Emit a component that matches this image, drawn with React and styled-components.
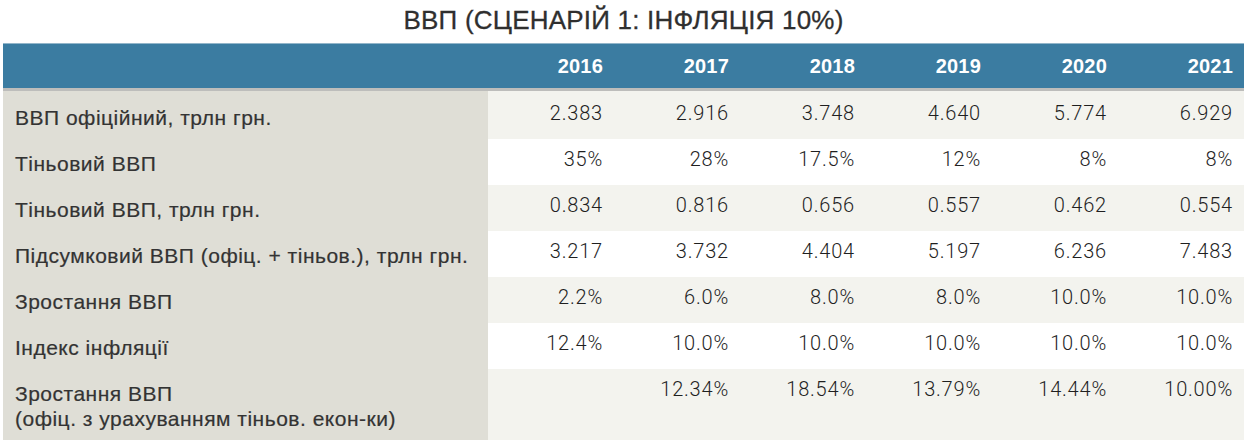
import React from 'react';
import styled, { createGlobalStyle } from 'styled-components';

const GlobalStyle = createGlobalStyle`
  html, body {
    margin: 0;
    padding: 0;
    background: #ffffff;
  }
  body {
    font-family: 'Liberation Sans', Arial, sans-serif;
    color: #333333;
  }
`;

const Page = styled.div`
  width: 1247px;
  padding: 0 3px;
  box-sizing: border-box;
`;

const Title = styled.h1`
  margin: 0;
  height: 43px;
  line-height: 40px;
  text-align: center;
  font-size: 26px;
  font-weight: 400;
  letter-spacing: 0.2px;
  color: #2f2f2f;
  -webkit-text-stroke: 0.3px #2f2f2f;
`;

const Table = styled.table`
  width: 100%;
  border-collapse: collapse;
  table-layout: fixed;
`;

const HeadRow = styled.tr`
  background: #3b7ca1;
  border-top: 1px solid #93b6ca;
  border-bottom: 3px solid #bdbdbb;
`;

const HeadCell = styled.th`
  height: 44px;
  padding: 0 11px 0 0;
  text-align: right;
  font-size: 20px;
  font-weight: 700;
  letter-spacing: 0.2px;
  color: #ffffff;
`;

const Row = styled.tr`
  background: ${p => (p.$shade ? '#f3f3ee' : '#ffffff')};
`;

const LabelCell = styled.td`
  padding: ${p => (p.$first ? '14px' : '12px')} 0 9px 12px;
  background: #dfded6;
  font-size: 21px;
  line-height: 25px;
  letter-spacing: 0.5px;
  color: #333333;
  -webkit-text-stroke: 0.2px #333333;
  vertical-align: top;
  white-space: nowrap;
`;

const ValueCell = styled.td`
  padding: ${p => (p.$first ? '10px' : '8px')} 11px 0 0;
  text-align: right;
  font-family: Roboto, 'Liberation Sans', Arial, sans-serif;
  font-weight: 300;
  font-size: 20px;
  line-height: 25px;
  letter-spacing: 0.8px;
  color: #1f1f1f;
  vertical-align: top;
`;

const years = ['2016', '2017', '2018', '2019', '2020', '2021'];

const rows = [
  { label: 'ВВП офіційний, трлн грн.', values: ['2.383', '2.916', '3.748', '4.640', '5.774', '6.929'] },
  { label: 'Тіньовий ВВП', values: ['35%', '28%', '17.5%', '12%', '8%', '8%'] },
  { label: 'Тіньовий ВВП, трлн грн.', values: ['0.834', '0.816', '0.656', '0.557', '0.462', '0.554'] },
  { label: 'Підсумковий ВВП (офіц. + тіньов.), трлн грн.', values: ['3.217', '3.732', '4.404', '5.197', '6.236', '7.483'] },
  { label: 'Зростання ВВП', values: ['2.2%', '6.0%', '8.0%', '8.0%', '10.0%', '10.0%'] },
  { label: 'Індекс інфляції', values: ['12.4%', '10.0%', '10.0%', '10.0%', '10.0%', '10.0%'] },
  {
    label: ['Зростання ВВП', '(офіц. з урахуванням тіньов. екон-ки)'],
    values: ['', '12.34%', '18.54%', '13.79%', '14.44%', '10.00%'],
  },
];

const App = () => (
  <Page>
    <GlobalStyle />
    <Title>ВВП (СЦЕНАРІЙ 1: ІНФЛЯЦІЯ 10%)</Title>
    <Table>
      <colgroup>
        <col style={{ width: 485 }} />
        {years.map(y => (
          <col key={y} />
        ))}
      </colgroup>
      <thead>
        <HeadRow>
          <HeadCell />
          {years.map(y => (
            <HeadCell key={y}>{y}</HeadCell>
          ))}
        </HeadRow>
      </thead>
      <tbody>
        {rows.map((row, i) => (
          <Row key={i} $shade={i % 2 === 0}>
            <LabelCell $first={i === 0}>
              {Array.isArray(row.label)
                ? row.label.map((line, j) => <div key={j}>{line}</div>)
                : row.label}
            </LabelCell>
            {row.values.map((v, j) => (
              <ValueCell key={j} $first={i === 0}>
                {v}
              </ValueCell>
            ))}
          </Row>
        ))}
      </tbody>
    </Table>
  </Page>
);

export default App;
